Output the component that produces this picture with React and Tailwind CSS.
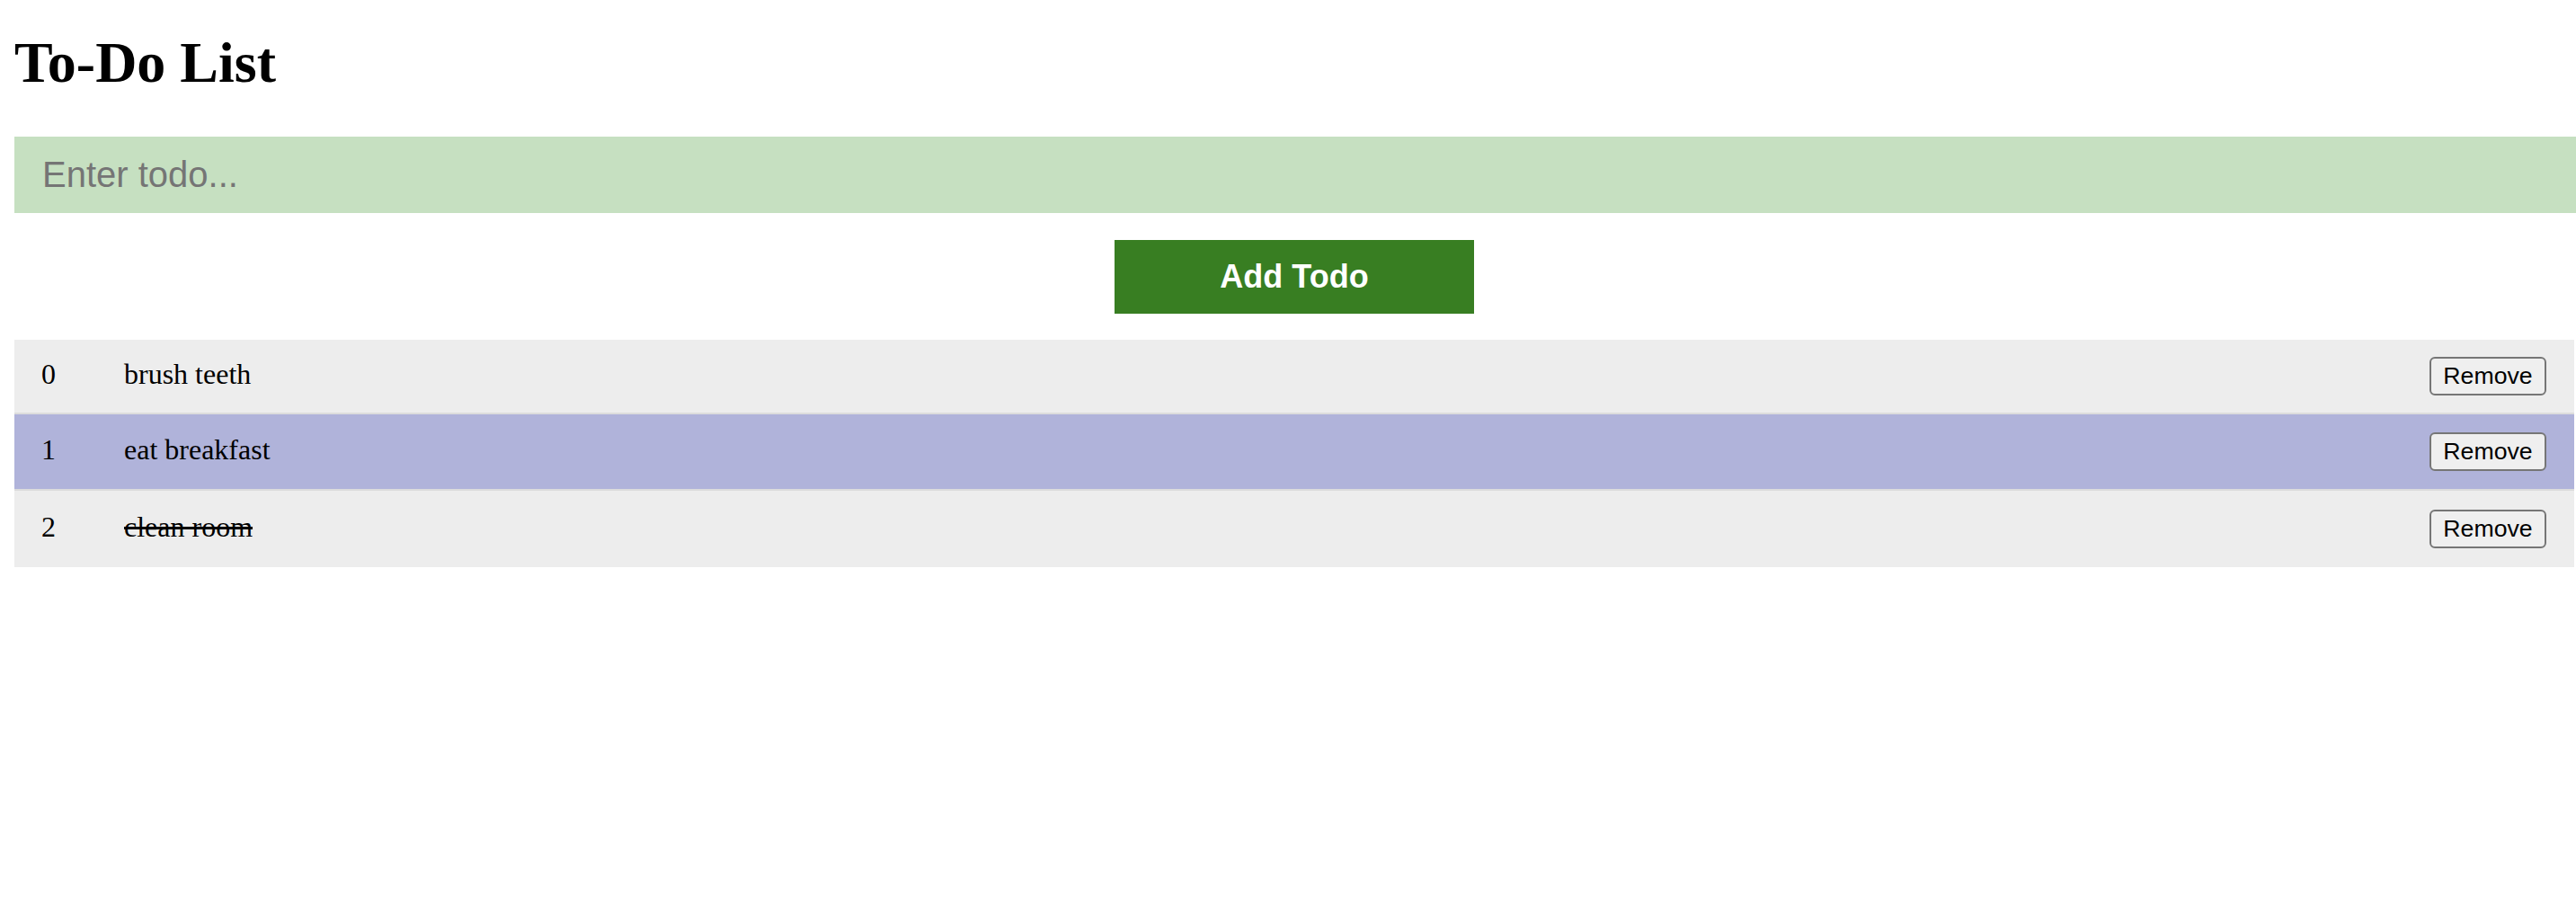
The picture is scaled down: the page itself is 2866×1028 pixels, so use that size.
import React from "react";

const todos = [
  { id: 0, text: "brush teeth", done: false, highlight: false },
  { id: 1, text: "eat breakfast", done: false, highlight: true },
  { id: 2, text: "clean room", done: true, highlight: false },
];

export default function App() {
  return (
    <div className="w-full min-h-[1028px] bg-white overflow-hidden">
      <div className="w-[2848px] ml-[16px] flex flex-col">
        <h1
          className="mt-[34px] text-[64px] leading-[72px] font-bold text-black"
          style={{ fontFamily: '"Liberation Serif", "Times New Roman", serif' }}
        >
          To-Do List
        </h1>
        <input
          type="text"
          placeholder="Enter todo..."
          className="mt-[46px] w-[2850px] h-[85px] bg-[#c6e0c1] pl-[31px] text-[40px] text-black placeholder:text-[#757575] outline-none border-0"
          style={{ fontFamily: '"Liberation Sans", Arial, sans-serif' }}
        />
        <div className="flex justify-center mt-[30px]">
          <button
            className="w-[400px] h-[82px] bg-[#387e22] text-white text-[36px] font-bold"
            style={{ fontFamily: '"Liberation Sans", Arial, sans-serif' }}
          >
            Add Todo
          </button>
        </div>
        <div className="mt-[29px] flex flex-col divide-y-2 divide-[#dcdcdc]">
          {todos.map((t) => (
            <div
              key={t.id}
              className={
                "flex items-center h-[85px] first:h-[83px] pl-[30px] pr-[31px] " +
                (t.highlight ? "bg-[#b0b3da]" : "bg-[#ededed]")
              }
              style={{ fontFamily: '"Liberation Serif", "Times New Roman", serif' }}
            >
              <span className="w-[92px] text-[32px] text-black pb-[6px]">{t.id}</span>
              <span
                className={
                  "flex-1 text-[32px] text-black pb-[6px] " +
                  (t.done ? "line-through decoration-[3px]" : "")
                }
              >
                {t.text}
              </span>
              <button
                className="w-[130px] h-[43px] bg-[#efefef] border-2 border-[#767676] rounded-[6px] text-[26.67px] text-black leading-none"
                style={{ fontFamily: '"Liberation Sans", Arial, sans-serif' }}
              >
                Remove
              </button>
            </div>
          ))}
        </div>
      </div>
    </div>
  );
}
